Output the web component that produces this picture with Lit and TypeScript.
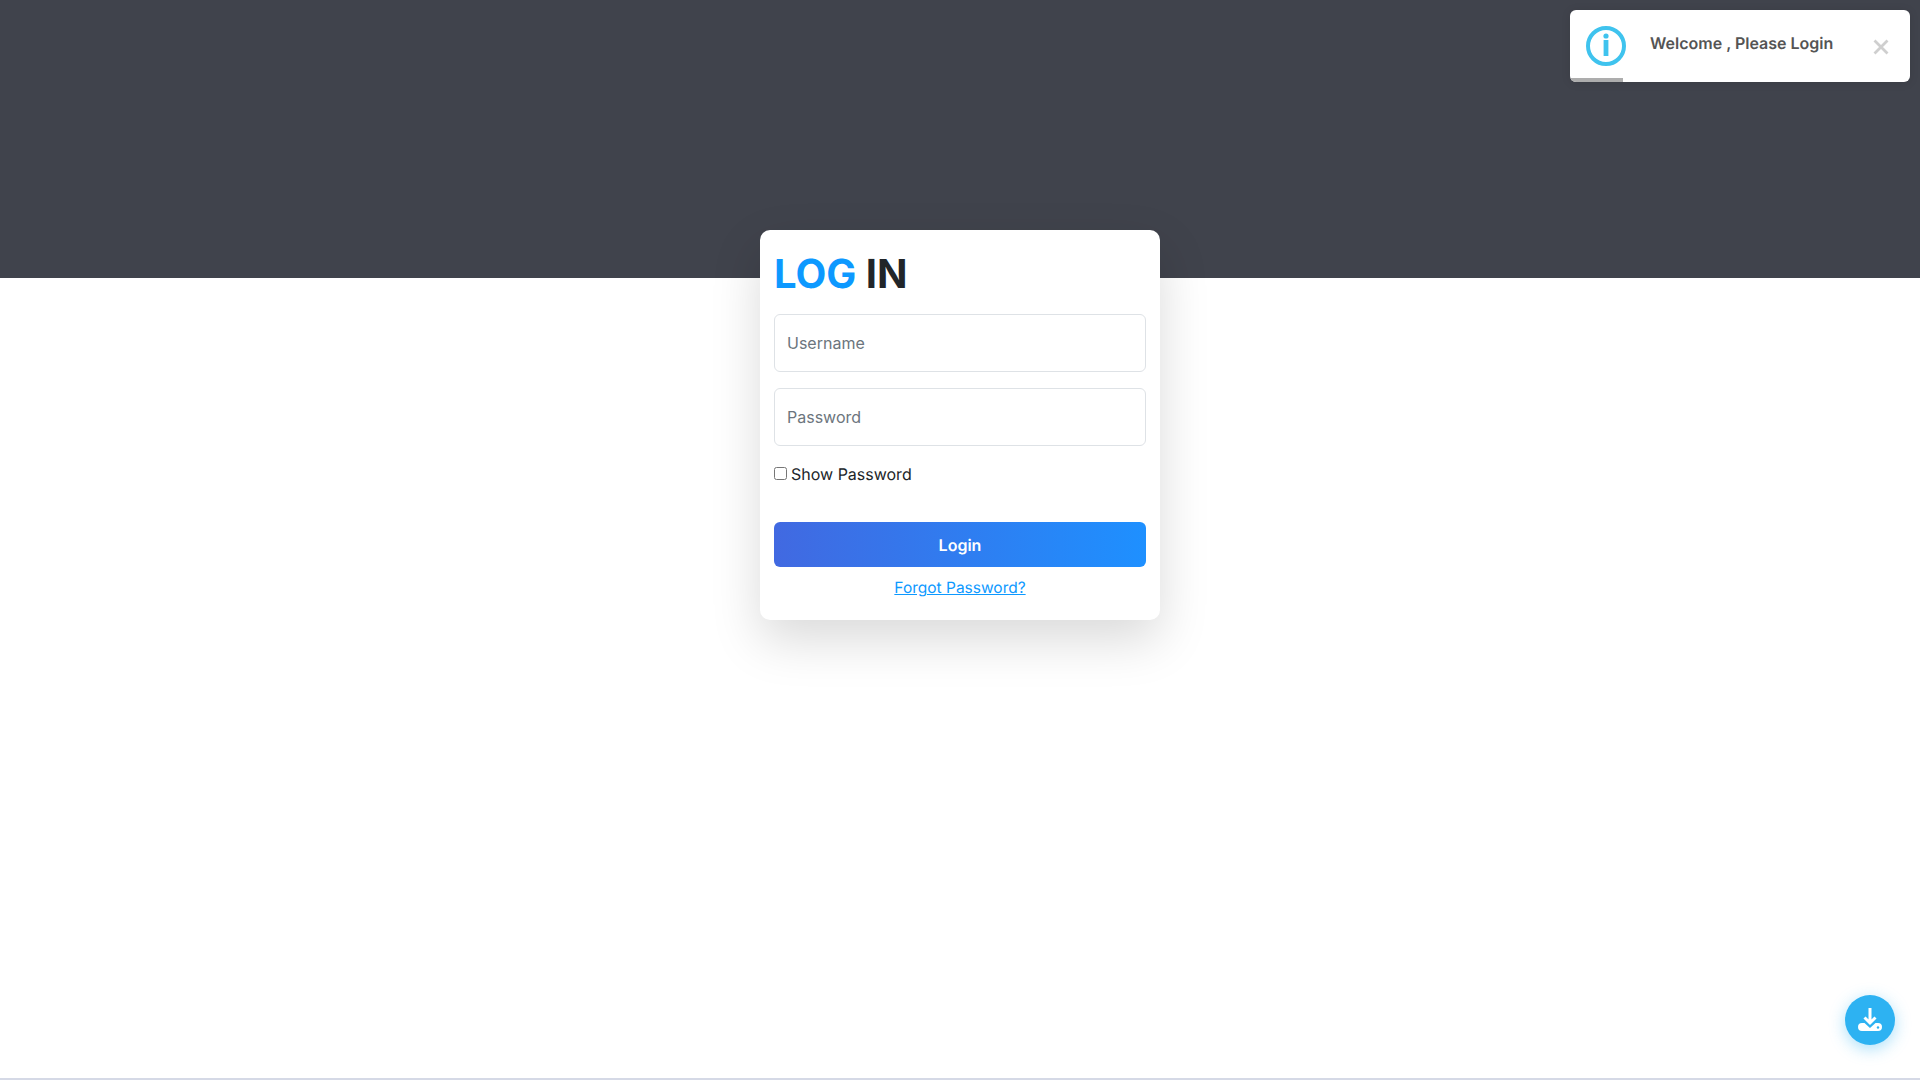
import { LitElement, html, css } from 'lit';
import { customElement } from 'lit/decorators.js';

@customElement('app-root')
class AppRoot extends LitElement {
    static styles = css`
        :host {
            display: block;
            position: relative;
            height: 1080px;
            overflow: hidden;
            background: #fff;
            font-family: Inter, "Liberation Sans", sans-serif;
            color: #212529;
            box-sizing: border-box;
            border-bottom: 2px solid #d5d9e6;
            text-rendering: geometricPrecision;
        }
        * { box-sizing: border-box; }

        .banner {
            height: 278px;
            background: #40434c;
        }
        .stage {
            display: flex;
            justify-content: center;
            margin-top: -48px;
        }

        .card {
            width: 400px;
            height: 390px;
            padding: 14px;
            background: #fff;
            border-radius: 10px;
            box-shadow: 0 20px 50px rgba(0, 0, 0, 0.15);
            display: flex;
            flex-direction: column;
        }
        h1 {
            margin: 6px 0 16px;
            font-size: 40px;
            line-height: 48px;
            font-weight: 700;
        }
        h1 span { color: #0d99ff; }

        input.field {
            display: block;
            width: 100%;
            height: 58px;
            padding: 0 12px;
            border: 1px solid #dee2e6;
            border-radius: 6px;
            font: 400 16px Inter, "Liberation Sans", sans-serif;
            color: #212529;
            background: #fff;
            margin-bottom: 16px;
        }
        input.field::placeholder { color: #6c757d; opacity: 1; }

        label.show {
            display: flex;
            align-items: center;
            gap: 4px;
            font-size: 16px;
            line-height: 24px;
        }
        label.show input {
            width: 13px;
            height: 13px;
            margin: -1px 0 0;
        }

        button.login {
            margin-top: 36px;
            height: 45px;
            border: 0;
            border-radius: 6px;
            background: linear-gradient(90deg, #4169e1, #1e90ff);
            color: #fff;
            font: 600 16px Inter, "Liberation Sans", sans-serif;
            text-rendering: geometricPrecision;
        }
        a.forgot {
            margin-top: 9px;
            text-align: center;
            font-size: 15.5px;
            line-height: 24px;
            color: #0d99ff;
            text-decoration: underline;
        }

        .toast {
            position: absolute;
            top: 10px;
            right: 10px;
            width: 340px;
            height: 72px;
            background: #fff;
            border-radius: 6px;
            box-shadow: 0 1px 10px rgba(0, 0, 0, 0.1);
            overflow: hidden;
            display: flex;
            align-items: flex-start;
            padding: 16px 0 0 16px;
        }
        .toast svg.info { flex: none; }
        .toast .msg {
            margin-left: 24px;
            font-size: 16px;
            line-height: 24px;
            font-weight: 600;
            color: #545454;
            margin-top: 5px;
        }
        .toast .close {
            position: absolute;
            top: 29px;
            right: 21px;
        }
        .toast .progress {
            position: absolute;
            left: 0;
            bottom: 0;
            width: 53px;
            height: 4px;
            background: #adadad;
        }

        .fab {
            position: absolute;
            right: 25px;
            bottom: 33px;
            width: 50px;
            height: 50px;
            border-radius: 50%;
            background: #2db2f2;
            box-shadow: 0 4px 16px rgba(45, 178, 242, 0.4);
            display: flex;
            align-items: center;
            justify-content: center;
        }
    `;

    render() {
        return html`
            <div class="banner"></div>
            <div class="stage">
                <form class="card">
                    <h1><span>LOG</span> IN</h1>
                    <input class="field" type="text" placeholder="Username" />
                    <input class="field" type="password" placeholder="Password" />
                    <label class="show"><input type="checkbox" />Show Password</label>
                    <button class="login" type="button">Login</button>
                    <a class="forgot" href="#">Forgot Password?</a>
                </form>
            </div>

            <div class="toast">
                <svg class="info" width="40" height="40" viewBox="0 0 40 40">
                    <circle cx="20" cy="20" r="18" fill="none" stroke="#3fc3ee" stroke-width="4"></circle>
                    <circle cx="20" cy="10" r="2.6" fill="#3fc3ee"></circle>
                    <rect x="17.6" y="14" width="4.8" height="16" fill="#3fc3ee"></rect>
                </svg>
                <div class="msg">Welcome , Please Login</div>
                <svg class="close" width="16" height="16" viewBox="0 0 16 16">
                    <path d="M1.5 1.5 L14.5 14.5 M14.5 1.5 L1.5 14.5" stroke="#cfcfcf" stroke-width="2.8" fill="none"></path>
                </svg>
                <div class="progress"></div>
            </div>

            <div class="fab">
                <svg width="28" height="28" viewBox="0 0 28 28">
                    <path d="M14 2 V16 M8.5 11.5 L14 17 L19.5 11.5" stroke="#fff" stroke-width="3" fill="none"></path>
                    <path d="M6 17 H8.5 L14 22 L19.5 17 H22 A4 4 0 0 1 22 25 H6 A4 4 0 0 1 6 17 Z" fill="#fff"></path>
                    <circle cx="22" cy="21.5" r="1.2" fill="#2db2f2"></circle>
                </svg>
            </div>
        `;
    }
}

declare global {
    interface HTMLElementTagNameMap {
        'app-root': AppRoot;
    }
}
